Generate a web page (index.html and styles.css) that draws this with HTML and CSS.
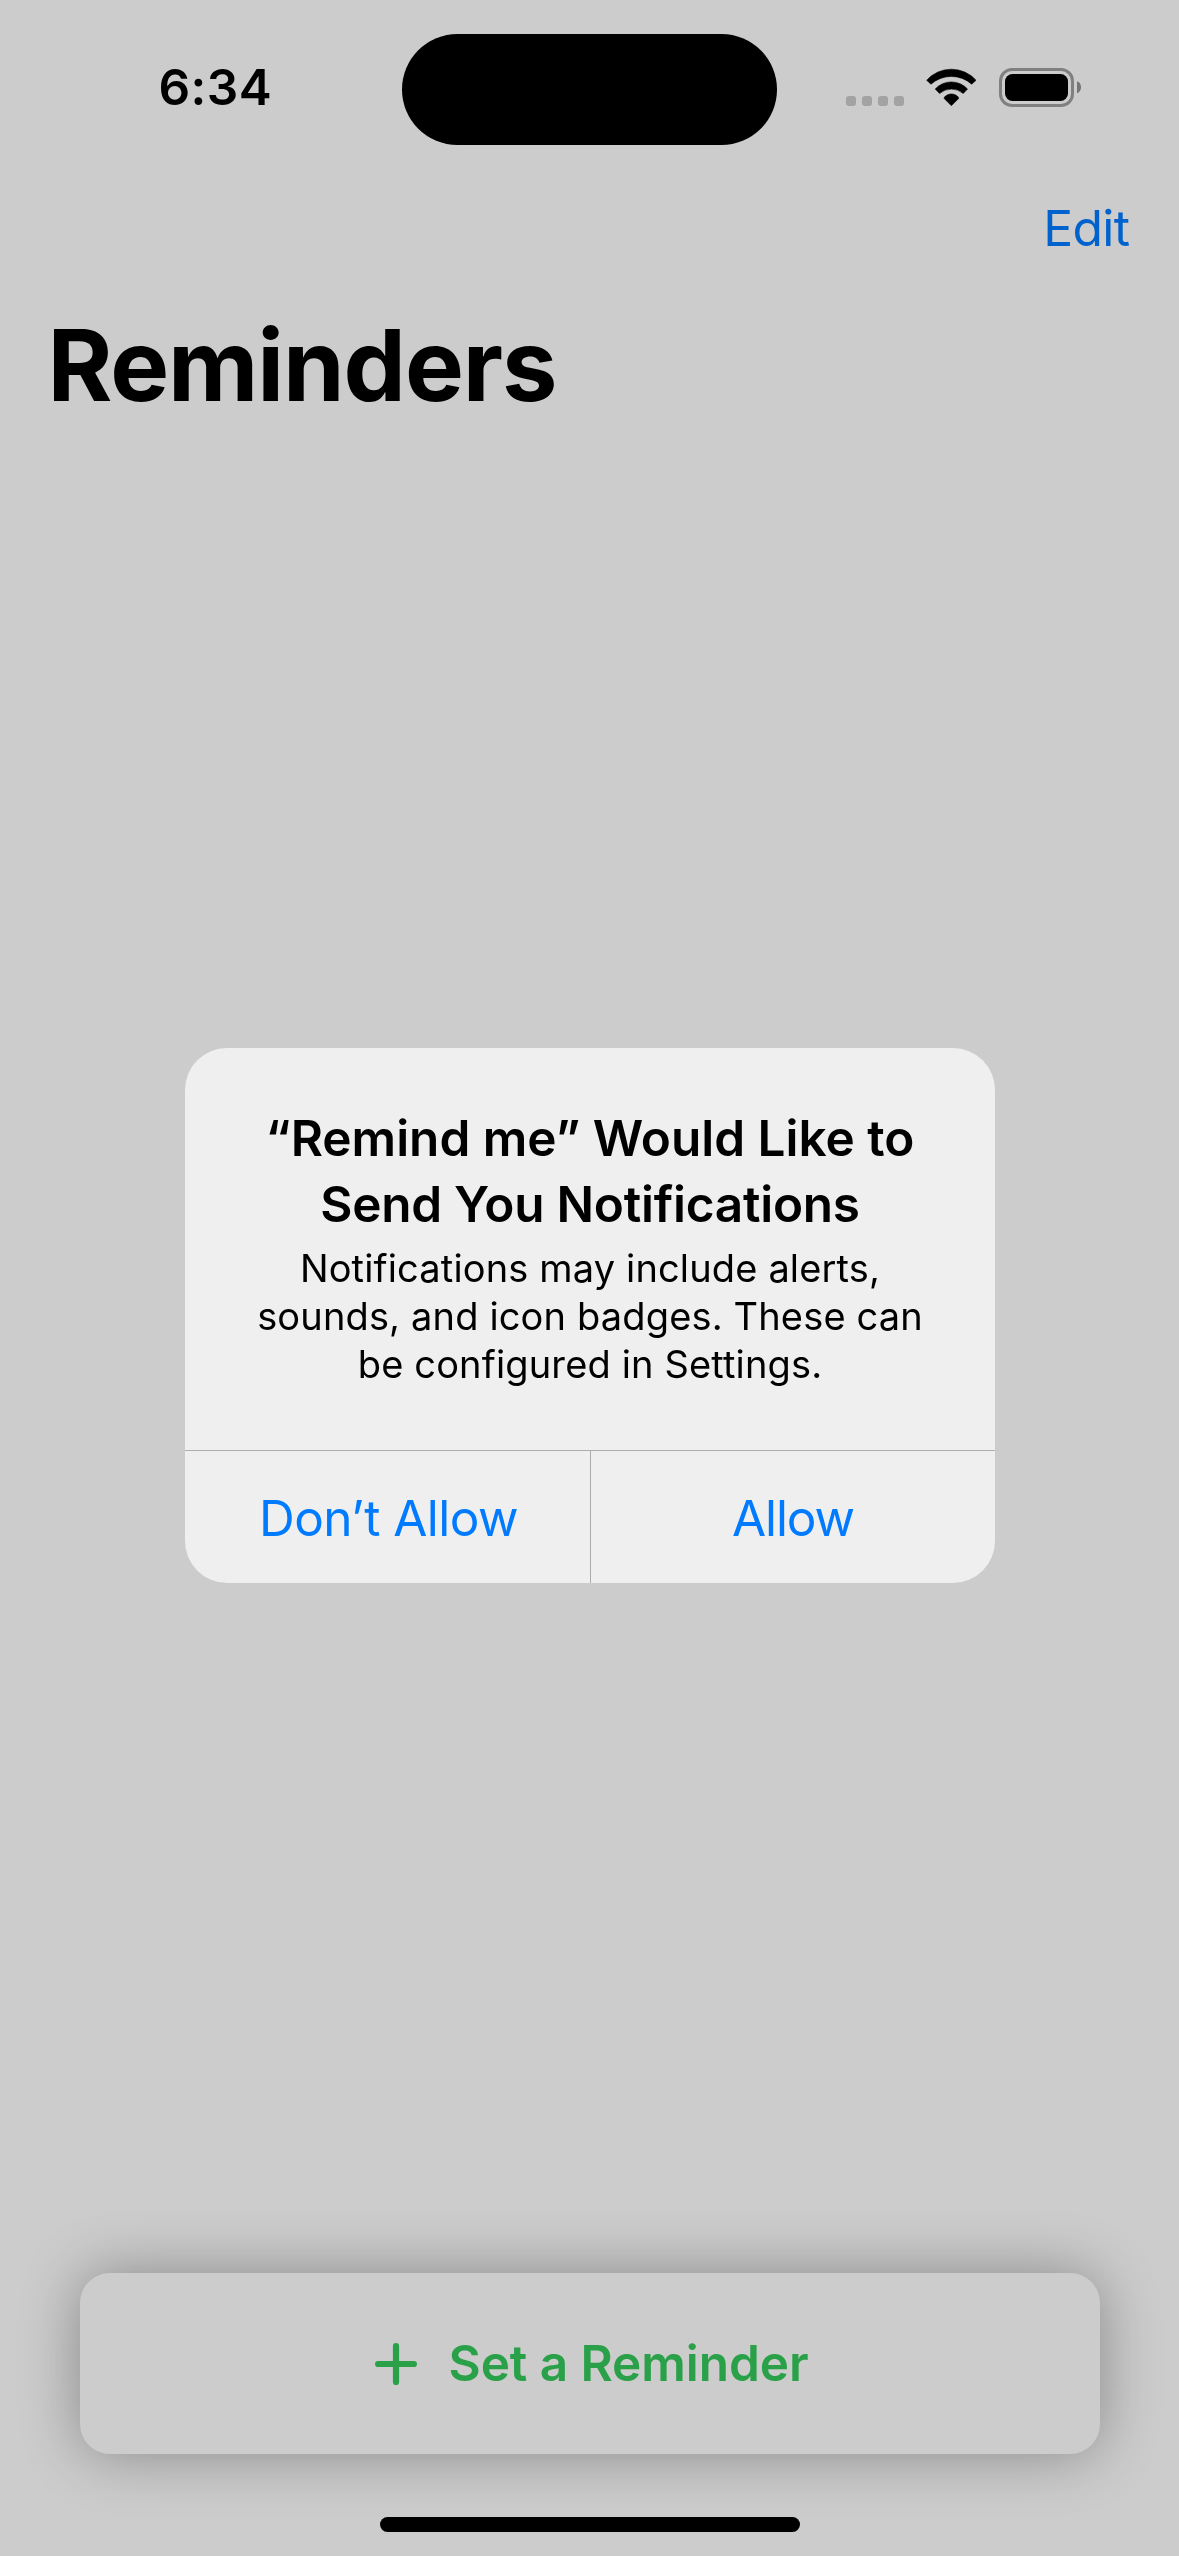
FILE: index.html
```html
<!DOCTYPE html>
<html lang="en">
<head>
<meta charset="utf-8">
<title>Reminders</title>
<link rel="stylesheet" href="styles.css">
</head>
<body>
<div class="screen">
  <header class="status-bar">
    <div class="time">6:34</div>
    <div class="island"></div>
    <div class="indicators">
      <div class="signal"><i></i><i></i><i></i><i></i></div>
      <svg class="wifi" width="51" height="39" viewBox="0 0 51 39" fill="#000" stroke="#000" stroke-width=".6" stroke-linejoin="round">
        <path d="M.7 12.3A32.9 32.9 0 0 1 50 12.3L45.7 16.2A30.5 30.5 0 0 0 5 16.2Z"/>
        <path d="M9.2 21A21.9 21.9 0 0 1 41.5 21L37.2 25.5A18 18 0 0 0 13.6 25.5Z"/>
        <path d="M17.9 30.2A8.7 8.7 0 0 1 32.9 30.2L25.4 37.7Z"/>
      </svg>
      <svg class="battery" width="83" height="39" viewBox="0 0 83 39">
        <rect x="1.5" y="1.5" width="72" height="36" rx="11.5" fill="none" stroke="#808080" stroke-width="3"/>
        <rect x="6" y="6" width="63" height="27" rx="7.5" fill="#000"/>
        <path d="M78 13.3Q82 15 82 19.3T78 25.5Z" fill="#757575"/>
      </svg>
    </div>
  </header>
  <nav class="nav-bar"><a class="edit">Edit</a></nav>
  <h1 class="title">Reminders</h1>
  <main class="list"></main>
  <button class="set-reminder">
    <svg width="42" height="42" viewBox="0 0 42 42" fill="none" stroke="#2aa149" stroke-width="6.2" stroke-linecap="round"><path d="M21 3.1V38.9M3.1 21H38.9"/></svg>
    <span class="set-label">Set a Reminder</span>
  </button>
  <div class="home-indicator"></div>
</div>

<div class="overlay">
  <section class="alert" role="alertdialog">
    <div class="alert-content">
      <h2 class="alert-title"><span>“Remind me” Would Like to</span><br><span class="snug">Send You Notifications</span></h2>
      <p class="alert-message">Notifications may include alerts,<br>sounds, and icon badges. These can<br>be configured in Settings.</p>
    </div>
    <div class="alert-actions">
      <button class="action deny">Don’t Allow</button>
      <button class="action allow">Allow</button>
    </div>
  </section>
</div>
</body>
</html>
```
FILE: styles.css
```css
* {
  box-sizing: border-box;
}

body {
  margin: 0;
  background: #ccc;
  color: #000;
  font-family: Inter, "Liberation Sans", sans-serif;
}

button {
  margin: 0;
  padding: 0;
  border: 0;
  background: none;
  font-family: inherit;
}

.screen {
  display: flex;
  flex-direction: column;
  width: 1179px;
  height: 2556px;
  overflow: hidden;
}

/* Status bar */
.status-bar {
  display: grid;
  grid-template-columns: 402px 375px 1fr;
  align-items: center;
  flex: none;
  height: 177px;
}

.time {
  margin-bottom: 3px;
  padding-left: 158.5px;
  font-size: 49.5px;
  font-weight: 600;
  line-height: 60px;
  letter-spacing: 0.42px;
}

.island {
  height: 111px;
  margin-top: 1px;
  border-radius: 56px;
  background: #000;
}

.indicators {
  display: flex;
  align-items: center;
  margin-bottom: 2px;
  padding-left: 69px;
}

.signal {
  display: flex;
  gap: 6px;
  margin: 27px 22px 0 0;
}

.signal i {
  width: 10px;
  height: 10px;
  border-radius: 3px;
  background: #a3a3a3;
}

.wifi {
  margin-right: 22px;
}

/* Navigation */
.nav-bar {
  display: flex;
  justify-content: flex-end;
  align-items: center;
  flex: none;
  height: 102px;
  padding-right: 49.5px;
}

.edit {
  color: #0062cc;
  font-size: 49.8px;
  line-height: 60px;
  letter-spacing: -0.6px;
}

.title {
  flex: none;
  margin: 0;
  padding: 1px 0 0 47.5px;
  font-size: 99px;
  font-weight: 700;
  line-height: 171px;
  letter-spacing: -1.1px;
}

.list {
  flex: 1;
}

/* Bottom button */
.set-reminder {
  display: flex;
  align-items: center;
  flex: none;
  gap: 31.5px;
  height: 181px;
  margin: 0 79px 63px 80px;
  padding-left: 295px;
  border-radius: 30px;
  background: #ccc;
  box-shadow: 0 0 60px rgba(0, 0, 0, 0.33);
  color: #2aa149;
  font-size: 49.5px;
  font-weight: 600;
  line-height: 60px;
  letter-spacing: -0.05px;
}

.set-label {
  margin-bottom: 2px;
}

.home-indicator {
  flex: none;
  width: 420px;
  height: 15px;
  margin: 0 0 24px 380px;
  border-radius: 8px;
  background: #000;
  z-index: 1;
}

/* Permission alert */
.overlay {
  position: fixed;
  inset: 0;
  display: flex;
  justify-content: center;
  align-items: flex-start;
  padding: 1048px 184px 0 185px;
}

.alert {
  width: 810px;
  height: 535px;
  overflow: hidden;
  border-radius: 42px;
  background: #efefef;
}

.alert-content {
  height: 403px;
  padding-top: 57px;
  border-bottom: 1px solid #adadad;
  text-align: center;
  white-space: nowrap;
}

.alert-title {
  margin: 0;
  font-size: 49.5px;
  font-weight: 600;
  line-height: 66px;
}

.snug {
  letter-spacing: -0.24px;
}

.alert-message {
  margin: 7px 0 0;
  font-size: 38px;
  line-height: 48px;
  letter-spacing: 0.15px;
}

.alert-actions {
  display: grid;
  grid-template-columns: 406px 1fr;
  height: 132px;
}

.action {
  padding-top: 2px;
  color: #007aff;
  font-size: 49.5px;
}

.deny {
  border-right: 1px solid #adadad;
  padding-left: 2px;
  letter-spacing: -0.54px;
}

.allow {
  letter-spacing: -1.1px;
}
```
